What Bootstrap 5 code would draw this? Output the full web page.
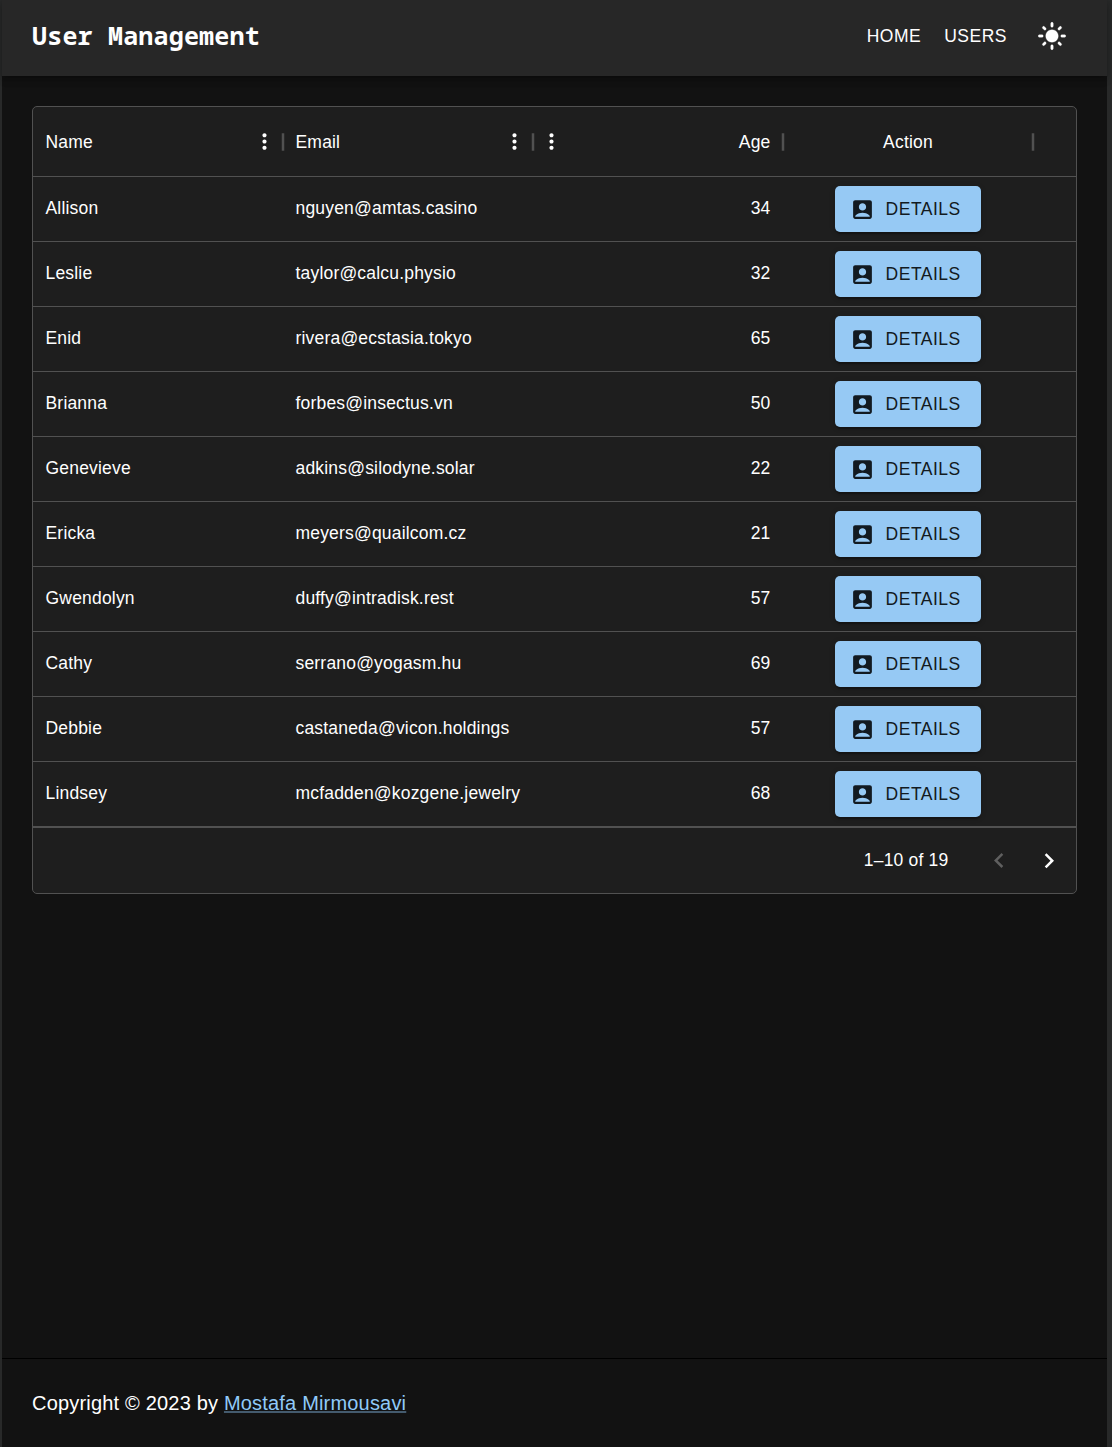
<!DOCTYPE html>
<html lang="en" data-bs-theme="dark">
<head>
<meta charset="utf-8">
<meta name="viewport" content="width=device-width, initial-scale=1">
<title>User Management</title>
<link href="https://cdn.jsdelivr.net/npm/bootstrap@5.3.0/dist/css/bootstrap.min.css" rel="stylesheet">
<style>
  body { background: #282929; color: #fff; font-family: "Liberation Sans", Arial, sans-serif; font-size: 17.5px; line-height: 25px; letter-spacing: .1875px; }
  .app { margin: 0 5px 0 2px; height: 1447px; background: #121212; }
  .topbar { height: 76px; padding: 0 26px 4px 30px; background: #272727; box-shadow: 0 2px 5px -1px rgba(0,0,0,.2), 0 5px 6px rgba(0,0,0,.14), 0 1px 12px rgba(0,0,0,.12); }
  .topbar .navbar-brand { font: 700 25px/40px "Noto Sans Mono", "DejaVu Sans Mono", monospace; color: #fff; letter-spacing: .1875px; margin-bottom: 2px; }
  .topbar .nav-link { color: #fff; letter-spacing: .5px; line-height: 30px; }
  .topbar .navbar-nav { gap: 23px; }
  .theme-btn { padding: 0; margin-left: 7px; margin-right: 14px; line-height: 0; border: 0; }
  svg { fill: currentColor; display: block; flex: none; }
  .page-main { padding: 30px; }
  .grid-card { background: #1e1e1e; border: 1px solid #515151; border-radius: 5px; --bs-card-bg: #1e1e1e; color: #fff; }
  .grid-line { border-bottom: 1px solid #515151; height: 65px; }
  .grid-head { height: 70px; }
  .cell { width: 250px; padding: 0 12.5px; flex: none; }
  .grid-line:not(.grid-head) .cell { padding-bottom: 2px; }
  .grid-line:not(.grid-head) .cell.act { padding-bottom: 0; }
  .grid-head .cell { padding-top: 1px; }
  .sep { position: absolute; right: -15px; top: 50%; margin-top: -15px; color: #515151; z-index: 1; }
  .kebab { margin: -1px -6px 0; }
  .kebab-start { margin-left: -7px; }
  .btn-details { width: 146px; height: 46px; margin-bottom: 1px; padding: 1px 0 0 15px; background: #96c9f4; color: #121a21; border: 0; border-radius: 5px; font-size: 17.5px; letter-spacing: .5px; box-shadow: 0 4px 1px -2px rgba(0,0,0,.2), 0 2px 2px rgba(0,0,0,.14), 0 1px 6px rgba(0,0,0,.12); gap: 10.6px; }
  .btn-details:hover { background: #42a5f5; }
  .grid-foot { height: 66px; border-top: 1px solid #515151; padding-right: 12px; }
  .pager-info { margin-right: 35.6px; }
  .pager-off { color: #5f5f5f; margin-right: 20px; }
  .foot { height: 89px; border-top: 1px solid #000; padding: 0 30px; font-size: 20px; }
  .foot a { color: #90caf9; text-decoration-color: rgba(144,202,249,.4); }
</style>
</head>
<body>
<svg class="d-none" xmlns="http://www.w3.org/2000/svg">
  <symbol id="sep" viewBox="0 0 24 24"><path d="M11 19V5h2v14z"/></symbol>
  <symbol id="more" viewBox="0 0 24 24"><path d="M12 8c1.1 0 2-.9 2-2s-.9-2-2-2-2 .9-2 2 .9 2 2 2zm0 2c-1.1 0-2 .9-2 2s.9 2 2 2 2-.9 2-2-.9-2-2-2zm0 6c-1.1 0-2 .9-2 2s.9 2 2 2 2-.9 2-2-.9-2-2-2z"/></symbol>
  <symbol id="account" viewBox="0 0 24 24"><path d="M19 3H5c-1.1 0-2 .9-2 2v14c0 1.1.9 2 2 2h14c1.1 0 2-.9 2-2V5c0-1.1-.9-2-2-2zm-7 3c1.93 0 3.5 1.57 3.5 3.5S13.93 13 12 13s-3.5-1.57-3.5-3.5S10.07 6 12 6zm7 13H5v-.23c0-.62.28-1.2.76-1.58C7.47 15.82 9.64 15 12 15s4.53.82 6.24 2.19c.48.38.76.97.76 1.58V19z"/></symbol>
</svg>
<div class="app d-flex flex-column">
  <nav class="topbar navbar navbar-expand d-flex flex-nowrap align-items-center">
    <a class="navbar-brand me-0 p-0" href="#">User Management</a>
    <div class="navbar-nav ms-auto align-items-center">
      <a class="nav-link p-0" href="#">HOME</a>
      <a class="nav-link p-0" href="#">USERS</a>
      <button class="btn theme-btn text-white" aria-label="Toggle theme">
        <svg width="30" height="30" viewBox="0 0 24 24"><path d="M12 7c-2.76 0-5 2.24-5 5s2.24 5 5 5 5-2.24 5-5-2.24-5-5-5zM2 13h2c.55 0 1-.45 1-1s-.45-1-1-1H2c-.55 0-1 .45-1 1s.45 1 1 1zm18 0h2c.55 0 1-.45 1-1s-.45-1-1-1h-2c-.55 0-1 .45-1 1s.45 1 1 1zM11 2v2c0 .55.45 1 1 1s1-.45 1-1V2c0-.55-.45-1-1-1s-1 .45-1 1zm0 18v2c0 .55.45 1 1 1s1-.45 1-1v-2c0-.55-.45-1-1-1s-1 .45-1 1zM5.99 4.58c-.39-.39-1.03-.39-1.41 0-.39.39-.39 1.03 0 1.41l1.06 1.06c.39.39 1.03.39 1.41 0s.39-1.03 0-1.41L5.99 4.58zm12.37 12.37c-.39-.39-1.03-.39-1.41 0-.39.39-.39 1.03 0 1.41l1.06 1.06c.39.39 1.03.39 1.41 0 .39-.39.39-1.03 0-1.41l-1.06-1.06zm1.06-10.96c.39-.39.39-1.03 0-1.41-.39-.39-1.03-.39-1.41 0l-1.06 1.06c-.39.39-.39 1.03 0 1.41s1.03.39 1.41 0l1.06-1.06zM7.05 18.36c.39-.39.39-1.03 0-1.41-.39-.39-1.03-.39-1.41 0l-1.06 1.06c-.39.39-.39 1.03 0 1.41s1.03.39 1.41 0l1.06-1.06z" stroke="currentColor" stroke-width=".25"/></svg>
      </button>
    </div>
  </nav>
  <main class="page-main flex-grow-1">
    <div class="card grid-card">
      <div class="grid-line grid-head d-flex">
        <div class="cell d-flex align-items-center justify-content-between position-relative"><span>Name</span><svg class="kebab" width="25" height="25"><use href="#more"/></svg><svg class="sep" width="30" height="30"><use href="#sep"/></svg></div>
        <div class="cell d-flex align-items-center justify-content-between position-relative"><span>Email</span><svg class="kebab" width="25" height="25"><use href="#more"/></svg><svg class="sep" width="30" height="30"><use href="#sep"/></svg></div>
        <div class="cell d-flex align-items-center justify-content-between position-relative"><svg class="kebab kebab-start" width="25" height="25"><use href="#more"/></svg><span>Age</span><svg class="sep" width="30" height="30"><use href="#sep"/></svg></div>
        <div class="cell d-flex align-items-center justify-content-center position-relative"><span>Action</span><svg class="sep" width="30" height="30"><use href="#sep"/></svg></div>
      </div>
      <div id="rows"></div>
      <div class="grid-foot d-flex align-items-center justify-content-end">
        <span class="pager-info">1–10 of 19</span>
        <svg class="pager-off" width="30" height="30" viewBox="0 0 24 24"><path d="M15.41 16.09l-4.58-4.59 4.58-4.59L14 5.5l-6 6 6 6z"/></svg>
        <svg width="30" height="30" viewBox="0 0 24 24"><path d="M8.59 16.34l4.58-4.59-4.58-4.59L10 5.75l6 6-6 6z"/></svg>
      </div>
    </div>
  </main>
  <footer class="foot d-flex align-items-center"><span>Copyright © 2023 by <a href="#">Mostafa Mirmousavi</a></span></footer>
</div>
<script src="https://cdn.jsdelivr.net/npm/bootstrap@5.3.0/dist/js/bootstrap.bundle.min.js"></script>
<script>
  const users = [
    ["Allison", "nguyen@amtas.casino", 34], ["Leslie", "taylor@calcu.physio", 32],
    ["Enid", "rivera@ecstasia.tokyo", 65], ["Brianna", "forbes@insectus.vn", 50],
    ["Genevieve", "adkins@silodyne.solar", 22], ["Ericka", "meyers@quailcom.cz", 21],
    ["Gwendolyn", "duffy@intradisk.rest", 57], ["Cathy", "serrano@yogasm.hu", 69],
    ["Debbie", "castaneda@vicon.holdings", 57], ["Lindsey", "mcfadden@kozgene.jewelry", 68]
  ];
  document.getElementById("rows").innerHTML = users.map(([name, email, age]) => `
    <div class="grid-line d-flex">
      <div class="cell d-flex align-items-center">${name}</div>
      <div class="cell d-flex align-items-center">${email}</div>
      <div class="cell d-flex align-items-center justify-content-end">${age}</div>
      <div class="cell act d-flex align-items-center justify-content-center"><button class="btn btn-details d-flex align-items-center"><svg width="25" height="25"><use href="#account"/></svg>DETAILS</button></div>
    </div>`).join("");
</script>
</body>
</html>
